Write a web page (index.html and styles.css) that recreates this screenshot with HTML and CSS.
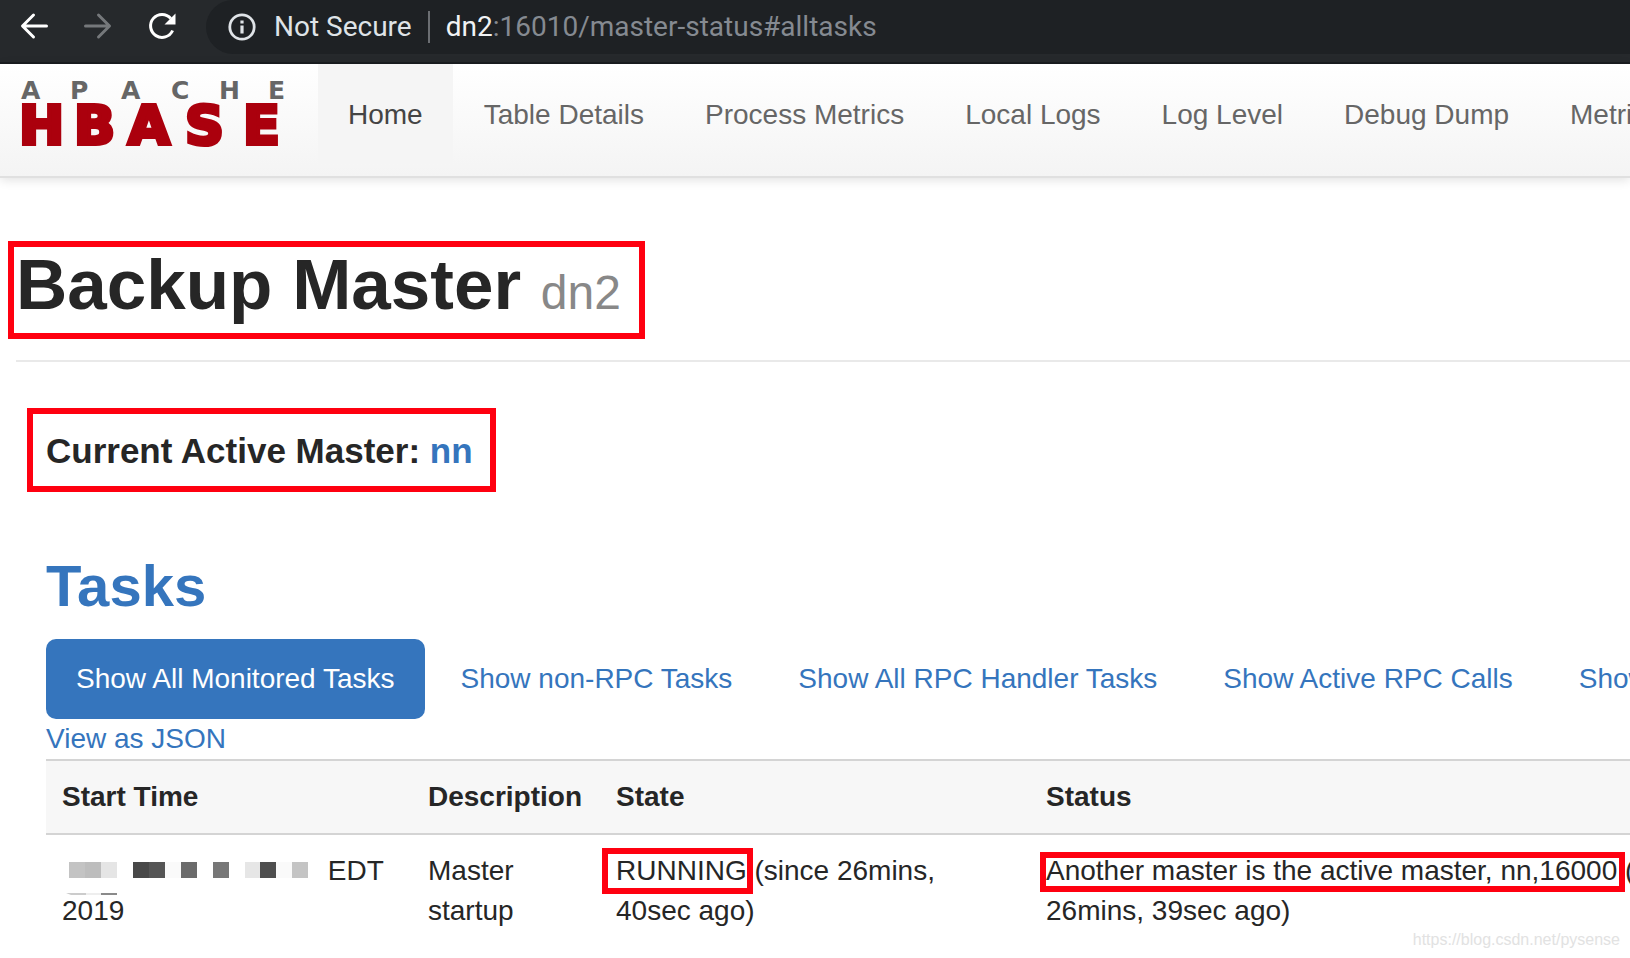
FILE: index.html
```html
<!DOCTYPE html>
<html lang="en">
<head>
<meta charset="utf-8">
<title>Backup Master: dn2</title>
<link rel="stylesheet" href="styles.css">
</head>
<body>
<div class="toolbar">
  <div class="toolbar-buttons">
    <button class="tool" type="button" aria-label="Back">
      <svg width="32" height="32" viewBox="0 0 32 32" fill="none" stroke="#fff" stroke-width="3" stroke-linecap="round" stroke-linejoin="round"><path d="M28.500 16H5M15.500 5L4.500 16L15.500 27"/></svg>
    </button>
    <button class="tool" type="button" aria-label="Forward">
      <svg width="32" height="32" viewBox="0 0 32 32" fill="none" stroke="#75787b" stroke-width="3" stroke-linecap="round" stroke-linejoin="round"><path d="M3.500 16H27M16.500 5L27.500 16L16.500 27"/></svg>
    </button>
    <button class="tool" type="button" aria-label="Reload">
      <svg width="32" height="32" viewBox="0 0 32 32"><path d="M24.800 8.400A11.500 11.500 0 1 0 26.600 20.500" fill="none" stroke="#fff" stroke-width="3"/><path d="M29.500 3.500V14.500H18.500Z" fill="#fff"/></svg>
    </button>
  </div>
  <div class="omnibox">
    <svg class="info" width="28" height="28" viewBox="0 0 28 28"><circle cx="14" cy="14" r="12.200" fill="none" stroke="#dfe3e7" stroke-width="2.800"/><path d="M12.400 12.500h3.200v8h-3.200zM12.400 7.500h3.200v3h-3.200z" fill="#dfe3e7"/></svg>
    <span class="security">Not Secure</span>
    <span class="divider"></span>
    <span class="url"><span class="host">dn2</span>:16010/master-status#alltasks</span>
  </div>
</div>

<header class="navbar">
  <a class="brand" href="#">
    <svg class="logo" width="268" height="66" viewBox="0 0 268 66" role="img" aria-label="Apache HBase">
      <text class="logo-top" x="1 50 101 151 199 248" y="19">APACHE</text>
      <text class="logo-main" x="-1 54 108 165 223" y="64">HBASE</text>
    </svg>
  </a>
  <nav class="nav">
    <a class="nav-link active" href="#">Home</a>
    <a class="nav-link" href="#">Table Details</a>
    <a class="nav-link" href="#">Process Metrics</a>
    <a class="nav-link" href="#">Local Logs</a>
    <a class="nav-link" href="#">Log Level</a>
    <a class="nav-link" href="#">Debug Dump</a>
    <a class="nav-link" href="#">Metrics Dump</a>
  </nav>
</header>

<main class="page">
  <div class="page-header">
    <h1 class="title marked mark-title">Backup Master <small>dn2</small></h1>
  </div>
  <div class="content">
    <h4 class="active-master marked mark-master">Current Active Master: <a href="#">nn</a></h4>
    <h2 class="tasks-title"><a href="#">Tasks</a></h2>
    <nav class="pills">
      <a class="pill selected" href="#alltasks">Show All Monitored Tasks</a>
      <a class="pill" href="#">Show non-RPC Tasks</a>
      <a class="pill" href="#">Show All RPC Handler Tasks</a>
      <a class="pill" href="#">Show Active RPC Calls</a>
      <a class="pill" href="#">Show Client Operations</a>
    </nav>
    <a class="json" href="#">View as JSON</a>
    <table class="tasks">
      <colgroup><col class="col-time"><col class="col-desc"><col class="col-state"><col></colgroup>
      <thead>
        <tr><th>Start Time</th><th>Description</th><th>State</th><th>Status</th></tr>
      </thead>
      <tbody>
        <tr>
          <td><svg class="mosaic" width="258" height="40" viewBox="0 0 258 40" aria-hidden="true">
            <path fill="#c3c3c3" d="M7 11h16v16H7z"/><path fill="#bdbdbd" d="M23 11h16v16H23z"/><path fill="#e5e5e5" d="M39 11h16v16H39z"/>
            <path fill="#484848" d="M71 11h16v16H71z"/><path fill="#555" d="M87 11h16v16H87z"/><path fill="#fafafa" d="M103 11h16v16h-16z"/>
            <path fill="#6b6b6b" d="M119 11h16v16h-16z"/><path fill="#777" d="M151 11h16v16h-16z"/>
            <path fill="#e6e6e6" d="M183 11h16v16h-16z"/><path fill="#4e4e4e" d="M198 11h16v16h-16z"/><path fill="#fafafa" d="M214 11h16v16h-16z"/><path fill="#c4c4c4" d="M230 11h16v16h-16z"/>
            <path fill="#ccc" d="M4 42h20v2H9z"/><path fill="#eee" d="M24 42h15v2H24z"/><path fill="#8a8a8a" d="M39 42h16v2H39z"/>
          </svg> EDT<br>2019</td>
          <td>Master<br>startup</td>
          <td><span class="marked mark-state">RUNNING</span> (since 26mins,<br>40sec ago)</td>
          <td><span class="marked mark-status">Another master is the active master, nn,16000</span> (since<br>26mins, 39sec ago)</td>
        </tr>
      </tbody>
    </table>
  </div>
</main>
<div class="watermark">https://blog.csdn.net/pysense</div>
</body>
</html>
```
FILE: styles.css
```css
* { box-sizing: border-box; }

body {
  margin: 0;
  min-height: 100vh;
  position: relative;
  overflow: hidden;
  background: #fff;
  color: #262626;
  font: 28px/40px "Liberation Sans", Arial, sans-serif;
}

a { color: #3575bd; text-decoration: none; }

.toolbar {
  display: flex;
  align-items: flex-start;
  height: 64px;
  background: #26292c;
  border-bottom: 2px solid #1a1d20;
}

.toolbar-buttons {
  display: flex;
  flex: none;
  gap: 32px;
  width: 206px;
  padding: 10px 0 0 18px;
}

.tool {
  width: 32px;
  height: 32px;
  padding: 0;
  border: 0;
  background: none;
}

.tool svg { display: block; }

.omnibox {
  display: flex;
  flex: 1;
  align-items: center;
  height: 54px;
  padding-left: 22px;
  border-radius: 27px 0 0 27px;
  background: #1e2124;
  font-family: Roboto, sans-serif;
  white-space: nowrap;
}

.security { margin-left: 18px; color: #dfe3e7; }
.divider { width: 2px; height: 32px; margin: 0 16px; background: #6b6e72; }
.url { color: #858a91; }
.host { color: #f1f3f4; }

.navbar {
  display: flex;
  height: 114px;
  background: linear-gradient(#fff, #f4f4f4);
  border-bottom: 2px solid #e0e0e0;
  box-shadow: 0 2px 10px rgba(0, 0, 0, 0.12);
}

.brand { flex: none; padding: 16px 30px 0 20px; }
.logo { display: block; overflow: visible; }

.logo-top {
  font: bold 25px "DejaVu Sans", sans-serif;
  fill: #666;
}

.logo-main {
  font: bold 54px "DejaVu Sans", sans-serif;
  fill: #ab000d;
  stroke: #ab000d;
  stroke-width: 4px;
}

.nav { display: flex; gap: 1px; }
.nav-link { height: 100px; padding: 31px 30px 29px; color: #666; white-space: nowrap; }
.nav-link.active { background: #f5f5f5; color: #444; }

.page { padding: 67px 0 0 16px; }

.page-header {
  padding-bottom: 35px;
  border-bottom: 2px solid #e9e9e9;
}

h1, h2, h4 { margin: 0; font-weight: bold; }

.title { width: fit-content; height: 80px; font-size: 71px; line-height: 80px; }
.title small { color: #888; font-size: 48px; font-weight: normal; line-height: 1; }

.content { padding: 69px 0 0 30px; }
.active-master { width: fit-content; font-size: 35px; }
.tasks-title { margin: 82px 0 20px; font-size: 58px; line-height: 66px; }

/* Red call-out frames around the highlighted text */
.marked { position: relative; }
.marked::after { content: ""; position: absolute; border: 6px solid #ff0010; }
.mark-title::after { inset: -4px -24px -14px -8px; }
.mark-master::after { inset: -23px -23px -21px -19px; }
.mark-state::after { inset: -7px -6px -8px -14px; }
.mark-status::after { inset: -3px -8px -6px -6px; }

.pills { display: flex; gap: 6px; }
.pill { padding: 20px 30px; border-radius: 10px; white-space: nowrap; }
.pill.selected { background: #3575bd; color: #fff; }

.json { display: block; width: fit-content; }

.tasks {
  width: 100%;
  table-layout: fixed;
  border-collapse: separate;
  border-spacing: 0;
}

.col-time { width: 366px; }
.col-desc { width: 188px; }
.col-state { width: 430px; }

.tasks th, .tasks td { padding: 16px; text-align: left; vertical-align: top; white-space: nowrap; }

.tasks th {
  background: #f7f7f7;
  border-top: 2px solid #d4d4d4;
  border-bottom: 2px solid #d4d4d4;
}

.mosaic { vertical-align: top; overflow: visible; }

.watermark {
  position: absolute;
  right: 10px;
  bottom: 6px;
  color: #e2e2e2;
  font-size: 16px;
  line-height: 24px;
}
```
